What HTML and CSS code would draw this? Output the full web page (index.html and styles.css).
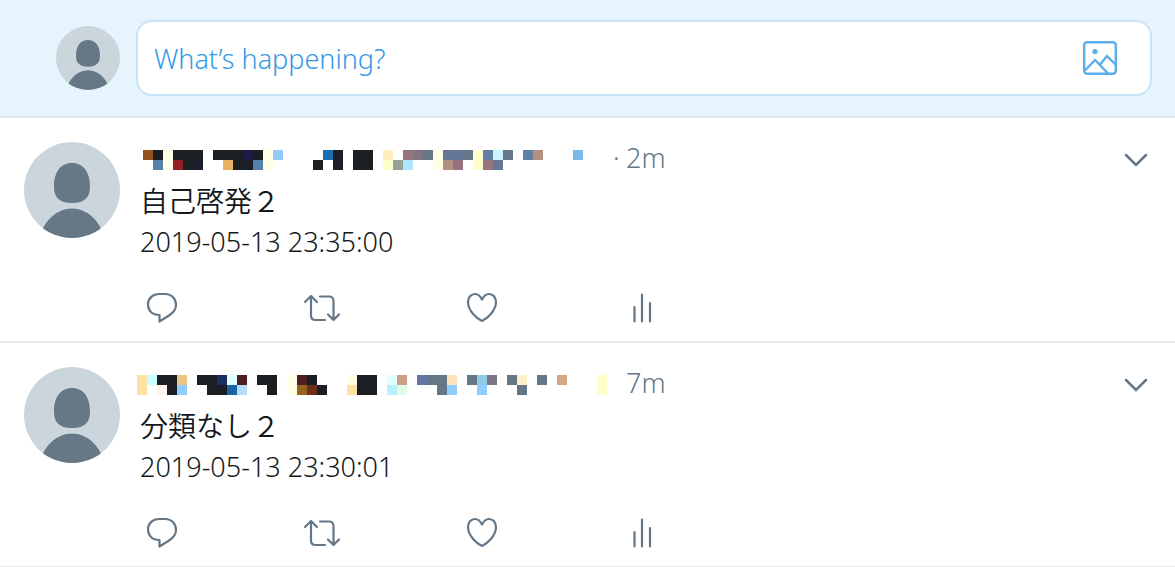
FILE: index.html
```html
<!DOCTYPE html>
<html lang="ja">
<head>
<meta charset="utf-8">
<title>Timeline</title>
<link rel="stylesheet" href="styles.css">
</head>
<body>
<svg class="defs" aria-hidden="true">
  <symbol id="avatar" viewBox="0 0 96 96">
    <rect width="96" height="96" fill="#cbd5dc"/>
    <path fill="#667785" d="M48 21C57 21 66 27 66 45C66 55 61 61 48 61C35 61 30 55 30 45C30 27 39 21 48 21ZM16 96C19 79 33 66.500 48 66.500S77 79 80 96Z"/>
  </symbol>
  <symbol id="reply" viewBox="0 0 32 32">
    <path d="M13 2H19C26 2 30 7 30 13C30 18 27 21 23 23.500L13.500 29.500V23C6 23 2 18.500 2 12.500C2 6 7 2 13 2Z"/>
  </symbol>
  <symbol id="retweet" viewBox="0 0 38 32">
    <path d="M2 10 8 4 14 10M8 4.500V23.500C8 26.500 9.500 28 12.500 28H22M17 4.500H26C29 4.500 30.500 6 30.500 9V28M25 22.500 30.500 28 36 22.500"/>
  </symbol>
  <symbol id="like" viewBox="0 0 32 32">
    <path d="M16 7.500C14 3.500 11.500 2 9 2C5 2 2 5.500 2 10C2 19 11 26.500 16 29C21 26.500 30 19 30 10C30 5.500 27 2 23 2C20.500 2 18 3.500 16 7.500Z"/>
  </symbol>
  <symbol id="stats" viewBox="0 0 32 32">
    <path d="M8.500 15V29.500M16 2.500V29.500M24 11V29.500"/>
  </symbol>
  <symbol id="chevron" viewBox="0 0 24 14">
    <path d="M2 2 12 12 22 2"/>
  </symbol>
</svg>

<header class="composer">
  <svg class="avatar avatar-small" aria-hidden="true"><use href="#avatar"/></svg>
  <div class="composer-box">
    <input class="composer-input" type="text" placeholder="What’s happening?" aria-label="What’s happening?">
    <button class="icon-button" type="button" aria-label="Add photo">
      <svg class="photo" viewBox="0 0 34 34" aria-hidden="true">
        <rect x="1.200" y="1.200" width="31.600" height="31.600" rx="3"/>
        <path d="M2 29.500 12 19 25.500 33M17 23.500 24 15 33 24"/>
        <circle class="sun" cx="12" cy="10.500" r="2.600"/>
      </svg>
    </button>
  </div>
</header>

<main>
  <article class="tweet">
    <svg class="avatar" aria-hidden="true"><use href="#avatar"/></svg>
    <div class="tweet-content">
      <div class="tweet-head">
        <svg class="mosaic" viewBox="-6 0 476 20" shape-rendering="crispEdges" aria-hidden="true">
          <g transform="scale(10)">
            <path fill="#1b1e22" d="M1 0h1v1h-1zM3 0h3v1h-1v1h-1v-1h-1zM7 0h5v1h-1v1h-2v-1h-2zM17 1h1v1h-1zM19 0h1v2h-1zM21 0h2v2h-2z"/>
            <path fill="#ffffe6" d="M2 0h1v2h-1zM12 0h1v2h-1zM29 0h1v2h-1z"/>
            <path fill="#5582ad" d="M1 1h1v1h-1zM11 1h1v1h-1z"/>
            <path fill="#95501f" d="M0 0h1v1h-1z"/>
            <path fill="#961f26" d="M3 1h1v1h-1z"/>
            <path fill="#1b1c2e" d="M5 1h1v1h-1z"/>
            <path fill="#1b1c47" d="M10 0h1v1h-1z"/>
            <path fill="#e9b263" d="M8 1h1v1h-1z"/>
            <path fill="#90caff" d="M13 0h1v1h-1z"/>
            <path fill="#1a6fb3" d="M18 0h1v1h-1z"/>
            <path fill="#ffeec0" d="M24 0h1v1h-1z"/>
            <path fill="#ffffcc" d="M24 1h1v1h-1zM33 0h1v2h-1z"/>
            <path fill="#96a198" d="M25 1h1v1h-1z"/>
            <path fill="#96747f" d="M26 0h1v1h-1zM31 1h1v1h-1zM34 1h1v1h-1z"/>
            <path fill="#b0e4ff" d="M26 1h1v1h-1z"/>
            <path fill="#817585" d="M27 0h1v1h-1z"/>
            <path fill="#657786" d="M28 0h1v1h-1zM32 0h1v1h-1zM36 0h1v1h-1z"/>
            <path fill="#657796" d="M30 0h2v1h-2zM35 1h1v1h-1z"/>
            <path fill="#b39082" d="M30 1h1v1h-1zM39 0h1v1h-1z"/>
            <path fill="#6080a3" d="M34 0h1v1h-1zM38 0h1v1h-1z"/>
            <path fill="#ccf6ff" d="M35 0h1v1h-1z"/>
            <path fill="#7ab9e5" d="M43 0h1v1h-1z"/>
          </g>
        </svg>
        <span class="dot">·</span>
        <time class="age">2m</time>
        <button class="icon-button more" type="button" aria-label="More"><svg class="chevron" aria-hidden="true"><use href="#chevron"/></svg></button>
      </div>
      <p class="tweet-text">自己啓発２</p>
      <p class="tweet-date">2019-05-13 23:35:00</p>
      <div class="actions">
        <button class="icon-button" type="button" aria-label="Reply"><svg class="icon" aria-hidden="true"><use href="#reply"/></svg></button>
        <button class="icon-button" type="button" aria-label="Retweet"><svg class="icon icon-wide" aria-hidden="true"><use href="#retweet"/></svg></button>
        <button class="icon-button" type="button" aria-label="Like"><svg class="icon" aria-hidden="true"><use href="#like"/></svg></button>
        <button class="icon-button" type="button" aria-label="Activity"><svg class="icon" aria-hidden="true"><use href="#stats"/></svg></button>
      </div>
    </div>
  </article>

  <article class="tweet">
    <svg class="avatar" aria-hidden="true"><use href="#avatar"/></svg>
    <div class="tweet-content">
      <div class="tweet-head">
        <svg class="mosaic" viewBox="0 0 476 20" shape-rendering="crispEdges" aria-hidden="true">
          <g transform="scale(10)">
            <path fill="#1b1e22" d="M2 0h2v2h-1v-1h-1zM6 0h2v1h1v1h-2v-1h-1zM12 0h2v2h-1v-1h-1zM17 0h1v1h-1zM18 1h1v1h-1zM22 0h2v2h-2z"/>
            <path fill="#ffe2a3" d="M0 0h1v2h-1zM21 1h1v1h-1z"/>
            <path fill="#ccffff" d="M1 0h1v1h-1z"/>
            <path fill="#fff5ee" d="M2 1h1v1h-1z"/>
            <path fill="#eec485" d="M4 0h1v1h-1z"/>
            <path fill="#90ceff" d="M4 1h1v1h-1zM31 1h1v1h-1zM34 1h1v1h-1z"/>
            <path fill="#1b3060" d="M8 0h1v1h-1z"/>
            <path fill="#e0ffff" d="M9 0h1v1h-1zM25 0h1v1h-1z"/>
            <path fill="#1865a5" d="M9 1h1v1h-1z"/>
            <path fill="#4f1d24" d="M10 0h1v1h-1zM16 0h1v1h-1z"/>
            <path fill="#b5dcfa" d="M10 1h1v1h-1z"/>
            <path fill="#ffffe6" d="M15 0h1v2h-1zM21 0h1v1h-1z"/>
            <path fill="#966322" d="M16 1h1v1h-1z"/>
            <path fill="#702f1c" d="M17 1h1v1h-1z"/>
            <path fill="#b8f0ff" d="M25 1h1v1h-1z"/>
            <path fill="#cca085" d="M26 0h1v1h-1z"/>
            <path fill="#e0fbe6" d="M26 1h1v1h-1z"/>
            <path fill="#6475a5" d="M28 0h1v1h-1z"/>
            <path fill="#657786" d="M29 0h2v2h-1v-1h-1zM33 0h1v1h-1zM37 0h1v1h-1zM38 1h1v1h-1zM40 0h1v1h-1z"/>
            <path fill="#ffe3bd" d="M31 0h1v1h-1z"/>
            <path fill="#90cce5" d="M34 0h1v1h-1z"/>
            <path fill="#7a7585" d="M35 0h1v1h-1z"/>
            <path fill="#fff0cc" d="M38 0h1v1h-1z"/>
            <path fill="#d6a783" d="M42 0h1v1h-1z"/>
            <path fill="#ffffcc" d="M46 0h1v2h-1z"/>
          </g>
        </svg>
        <span class="dot"></span>
        <time class="age">7m</time>
        <button class="icon-button more" type="button" aria-label="More"><svg class="chevron" aria-hidden="true"><use href="#chevron"/></svg></button>
      </div>
      <p class="tweet-text">分類なし２</p>
      <p class="tweet-date">2019-05-13 23:30:01</p>
      <div class="actions">
        <button class="icon-button" type="button" aria-label="Reply"><svg class="icon" aria-hidden="true"><use href="#reply"/></svg></button>
        <button class="icon-button" type="button" aria-label="Retweet"><svg class="icon icon-wide" aria-hidden="true"><use href="#retweet"/></svg></button>
        <button class="icon-button" type="button" aria-label="Like"><svg class="icon" aria-hidden="true"><use href="#like"/></svg></button>
        <button class="icon-button" type="button" aria-label="Activity"><svg class="icon" aria-hidden="true"><use href="#stats"/></svg></button>
      </div>
    </div>
  </article>
</main>
</body>
</html>
```
FILE: styles.css
```css
* {
  box-sizing: border-box;
}

body {
  margin: 0;
  background: #fff;
  color: #14171a;
  font: 350 27px/40px "Noto Sans", "Noto Sans CJK JP", sans-serif;
}

.defs {
  display: none;
}

.icon-button {
  display: flex;
  padding: 0;
  border: 0;
  background: none;
  color: #657786;
  cursor: pointer;
}

.avatar {
  flex: none;
  width: 96px;
  height: 96px;
  border-radius: 50%;
}

.avatar-small {
  width: 64px;
  height: 64px;
}

.composer {
  display: flex;
  align-items: center;
  gap: 16px;
  padding: 20px 23px 20px 56px;
  background: #e6f5fd;
  border-bottom: 2px solid #e1e8ed;
}

.composer-box {
  display: flex;
  flex: 1;
  align-items: center;
  padding: 14px 33px 14px 16px;
  border: 2px solid #c6e5f7;
  border-radius: 16px;
  background: #fff;
}

.composer-input {
  flex: 1;
  min-width: 0;
  height: 44px;
  padding: 0;
  border: 0;
  outline: 0;
  background: none;
  color: #14171a;
  font: inherit;
}

.composer-input::placeholder {
  color: #3399e5;
  opacity: 1;
}

.photo {
  width: 34px;
  height: 34px;
  fill: none;
  stroke: #5caeea;
  stroke-width: 2.4;
}

.photo .sun {
  fill: #5caeea;
  stroke: none;
}

.tweet {
  display: flex;
  gap: 20px;
  padding: 24px 27px 17px 24px;
  border-bottom: 2px solid #e6e8ea;
}

.tweet:last-child {
  border-bottom-width: 1px;
}

.tweet-content {
  flex: 1;
  min-width: 0;
}

.tweet-head {
  display: flex;
  align-items: center;
  height: 36px;
  margin-left: -3px;
  color: #657786;
}

.mosaic {
  flex: none;
  width: 476px;
  height: 20px;
}

.dot {
  width: 13px;
}

.dot,
.age {
  padding-bottom: 4px;
}

.more {
  margin-left: auto;
}

.chevron {
  width: 24px;
  height: 14px;
  fill: none;
  stroke: currentColor;
  stroke-width: 2.5;
  stroke-linecap: round;
}

.tweet-text,
.tweet-date {
  margin: 0;
}

.tweet-text {
  height: 44px;
  font: 350 28px/44px "Noto Sans CJK JP", sans-serif;
}

.actions {
  display: grid;
  grid-template-columns: repeat(4, 160px);
  align-items: center;
  margin-top: 30px;
  padding-left: 6px;
}

.icon {
  width: 32px;
  height: 32px;
  fill: none;
  stroke: currentColor;
  stroke-width: 2.2;
  stroke-linecap: round;
  stroke-linejoin: round;
}

.icon-wide {
  width: 38px;
  margin-left: -3px;
}
```
